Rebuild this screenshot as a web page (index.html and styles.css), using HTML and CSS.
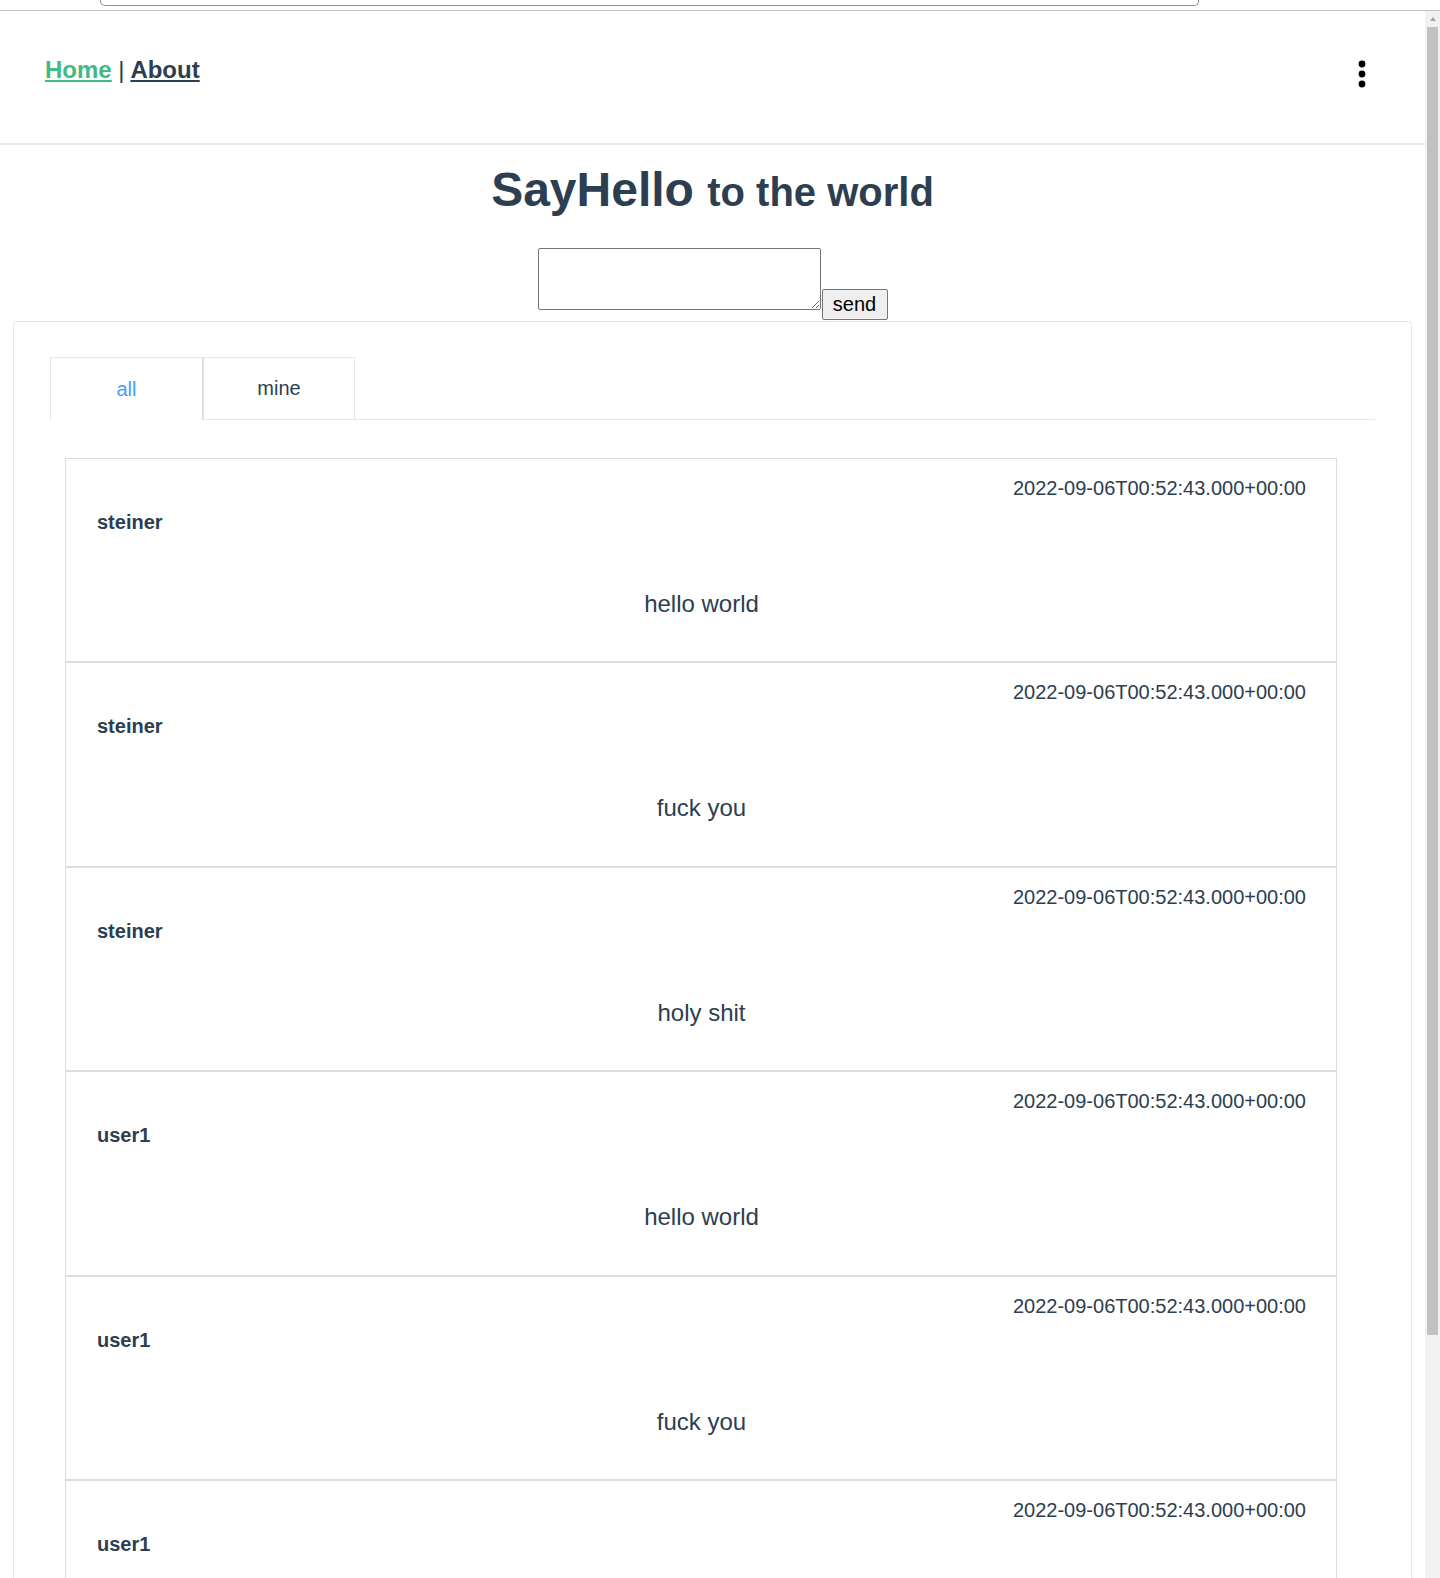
FILE: index.html
```html
<!DOCTYPE html>
<html lang="en">
<head>
<meta charset="utf-8">
<title>SayHello</title>
<link rel="stylesheet" href="styles.css">
</head>
<body>
<div class="chrome"><div class="addr"></div></div>
<div class="viewport">
  <div class="page">
    <header class="header">
      <nav class="nav">
        <a class="nav-link active" href="#">Home</a> <span class="sep">|</span> <a class="nav-link" href="#">About</a>
      </nav>
      <svg class="kebab" width="10" height="30" viewBox="0 0 10 30" aria-hidden="true">
        <circle cx="5" cy="5" r="3.4" fill="#000"/>
        <circle cx="5" cy="15" r="3.4" fill="#000"/>
        <circle cx="5" cy="25" r="3.4" fill="#000"/>
      </svg>
    </header>

    <h1 class="title">SayHello <span class="title-sub">to the world</span></h1>

    <form class="say-form">
      <textarea class="say-input"></textarea><button type="button" class="say-btn">send</button>
    </form>

    <section class="card">
      <div class="tabs">
        <div class="tab tab-active">all</div>
        <div class="tab">mine</div>
      </div>
      <div class="list">
        <div class="item">
          <div class="time">2022-09-06T00:52:43.000+00:00</div>
          <div class="user">steiner</div>
          <div class="msg">hello world</div>
        </div>
        <div class="item">
          <div class="time">2022-09-06T00:52:43.000+00:00</div>
          <div class="user">steiner</div>
          <div class="msg">fuck you</div>
        </div>
        <div class="item">
          <div class="time">2022-09-06T00:52:43.000+00:00</div>
          <div class="user">steiner</div>
          <div class="msg">holy shit</div>
        </div>
        <div class="item">
          <div class="time">2022-09-06T00:52:43.000+00:00</div>
          <div class="user">user1</div>
          <div class="msg">hello world</div>
        </div>
        <div class="item">
          <div class="time">2022-09-06T00:52:43.000+00:00</div>
          <div class="user">user1</div>
          <div class="msg">fuck you</div>
        </div>
        <div class="item">
          <div class="time">2022-09-06T00:52:43.000+00:00</div>
          <div class="user">user1</div>
          <div class="msg">holy shit</div>
        </div>
      </div>
    </section>
  </div>
  <div class="scrollbar">
    <div class="sb-arrow"></div>
    <div class="sb-thumb"></div>
  </div>
</div>
</body>
</html>
```
FILE: styles.css
```css
html, body {
  margin: 0;
  padding: 0;
  height: 100%;
  overflow: hidden;
  background: #fff;
}

body {
  font-family: "Liberation Sans", Arial, sans-serif;
  color: #2c3e50;
}

/* browser chrome strip */
.chrome {
  height: 10px;
  border-bottom: 1px solid #c2c2c2;
  background: #fff;
}
.addr {
  margin-left: 100px;
  width: 1097px;
  height: 5px;
  border: 1px solid #8e8e8e;
  border-top: none;
  border-radius: 0 0 5px 5px;
}

.viewport {
  display: flex;
  height: 1567px;
}

.page {
  width: 1425px;
  flex: 0 0 1425px;
  overflow: hidden;
}

/* scrollbar */
.scrollbar {
  flex: 1;
  background: #f1f1f1;
  display: flex;
  flex-direction: column;
  align-items: center;
}
.sb-arrow {
  margin-top: 6px;
  width: 0;
  height: 0;
  border-left: 3.5px solid transparent;
  border-right: 3.5px solid transparent;
  border-bottom: 4px solid #a3a3a3;
}
.sb-thumb {
  margin-top: 6px;
  width: 11px;
  height: 1308px;
  background: #c1c1c1;
}

/* header */
.header {
  height: 132px;
  border-bottom: 2px solid #e8e8e8;
  display: flex;
  justify-content: space-between;
  align-items: flex-start;
  padding: 0 58px 0 45px;
  box-sizing: content-box;
}
.nav {
  margin-top: 45px;
  font-size: 24px;
  line-height: 28px;
  font-weight: bold;
  color: #2c3e50;
}
.sep {
  font-weight: normal;
}
.nav-link {
  color: #2c3e50;
  text-decoration: underline;
}
.nav-link.active {
  color: #42b983;
}
.kebab {
  margin-top: 48px;
  display: block;
}

/* title */
.title {
  margin: 17px 0 0;
  text-align: center;
  font-size: 48px;
  line-height: 56px;
  font-weight: bold;
  color: #2c3e50;
}
.title-sub {
  font-size: 40px;
}

/* form */
.say-form {
  margin: 28px 0 0;
  height: 72px;
  display: flex;
  justify-content: center;
  align-items: flex-end;
}
.say-input {
  width: 283px;
  height: 62px;
  box-sizing: border-box;
  margin: 0 0 10px 0;
  padding: 2px;
  border: 1px solid #767676;
  border-radius: 2px;
  font-family: "Liberation Mono", monospace;
  font-size: 13px;
  resize: vertical;
  align-self: flex-start;
}
.say-btn {
  width: 66px;
  height: 31px;
  box-sizing: border-box;
  margin: 0 0 0 1px;
  padding: 0;
  border: 1px solid #767676;
  border-radius: 2px;
  background: #efefef;
  color: #000;
  font-family: "Liberation Sans", Arial, sans-serif;
  font-size: 20px;
}

/* card */
.card {
  margin: 1px 13px 0;
  border: 1px solid #e4e7ed;
  border-radius: 4px;
  padding: 35px 36px 0 36px;
}

.tabs {
  display: flex;
  height: 62px;
  border-bottom: 1px solid #e4e7ed;
}
.tab {
  width: 152px;
  height: 62px;
  box-sizing: border-box;
  border: 1px solid #e4e7ed;
  border-bottom: none;
  display: flex;
  align-items: center;
  justify-content: center;
  font-size: 20px;
  color: #2c3e50;
  background: #fff;
}
.tab + .tab {
  border-left: 1px solid #dcdfe6;
}
.tab-active {
  width: 153px;
  color: #409eff;
  height: 63px;
  margin-bottom: -1px;
  border-right: 1px solid #dcdfe6;
}

.list {
  margin: 38px 38px 0 15px;
}

.item {
  border: 1px solid #dddddd;
  padding: 18px 30px 43.4px 31px;
  color: #2c3e50;
}
.time {
  text-align: right;
  font-size: 20px;
  line-height: 23px;
}
.user {
  margin-top: 11px;
  font-size: 20px;
  line-height: 23px;
  font-weight: bold;
}
.msg {
  margin-top: 56px;
  text-align: center;
  font-size: 24px;
  line-height: 28px;
}
```
